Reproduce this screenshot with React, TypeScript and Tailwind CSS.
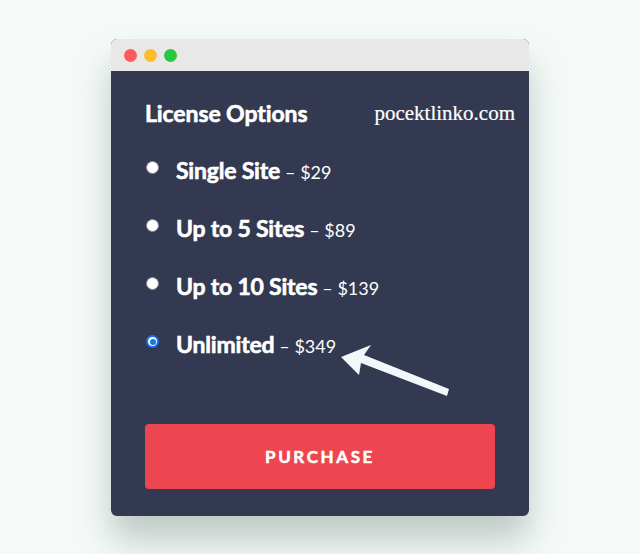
import React from "react";

const options = [
  { name: "Single Site", price: "$29", checked: false },
  { name: "Up to 5 Sites", price: "$89", checked: false },
  { name: "Up to 10 Sites", price: "$139", checked: false },
  { name: "Unlimited", price: "$349", checked: true },
];

function Radio({ checked }: { checked: boolean }) {
  return checked ? (
    <div className="flex h-[13px] w-[13px] shrink-0 items-center justify-center rounded-full bg-[#1a73e8]">
      <div className="flex h-[9px] w-[9px] items-center justify-center rounded-full bg-white">
        <div className="h-[6px] w-[6px] rounded-full bg-[#1a73e8]" />
      </div>
    </div>
  ) : (
    <div className="h-[13px] w-[13px] shrink-0 rounded-full border border-[#8a8a8a] bg-white" />
  );
}

export default function App() {
  return (
    <div className="flex h-[554px] w-[640px] justify-center bg-[#f5faf8] pt-[39px]" style={{ fontFamily: "Lato, 'Noto Sans', sans-serif" }}>
      <div className="relative flex h-[477px] w-[418px] flex-col overflow-hidden rounded-[6px] bg-[#323951] shadow-[0_24px_34px_rgba(110,130,120,0.4)]">
        <div className="flex h-[32px] shrink-0 items-center gap-[7px] bg-[#e8e8e8] pl-[13px]">
          <div className="h-[13px] w-[13px] rounded-full bg-[#fd5b5b]" />
          <div className="h-[13px] w-[13px] rounded-full bg-[#fdbb2e]" />
          <div className="h-[13px] w-[13px] rounded-full bg-[#27c840]" />
        </div>
        <div className="flex flex-col px-[34px]">
          <div className="mt-[28px] flex items-center justify-between">
            <span className="text-[23px] font-bold leading-[28px] tracking-[-0.1px] text-white [-webkit-text-stroke:0.6px_white]">License Options</span>
            <span className="mr-[-20px] text-[21px] leading-[28px] text-white [-webkit-text-stroke:0.2px_white]" style={{ fontFamily: "'Liberation Serif', serif" }}>
              pocektlinko.com
            </span>
          </div>
          <div className="mt-[30px] flex flex-col gap-[31px]">
            {options.map((o) => (
              <div key={o.name} className="flex h-[27px] items-center">
                <div className="mb-[6px] ml-[1px]"><Radio checked={o.checked} /></div>
                <span className="ml-[17px] text-[23px] font-bold leading-[27px] tracking-[-0.2px] text-white [-webkit-text-stroke:0.6px_white]">{o.name}</span>
                <span className="ml-[5px] mt-[3px] text-[18px] leading-[27px] text-white">– {o.price}</span>
              </div>
            ))}
          </div>
          <button className="mt-[66px] flex h-[65px] w-[350px] shrink-0 items-center justify-center rounded-[4px] bg-[#ee4650] text-[17px] font-bold tracking-[2.6px] text-white [-webkit-text-stroke:0.5px_white]">
            PURCHASE
          </button>
        </div>
        <svg className="absolute left-[230px] top-[306px]" width="115" height="52" viewBox="0 0 115 52">
          <polygon points="0,12 30,0 23,10 108,44 106,51 20,18 18,30" fill="#f2f7fc" />
        </svg>
      </div>
    </div>
  );
}
